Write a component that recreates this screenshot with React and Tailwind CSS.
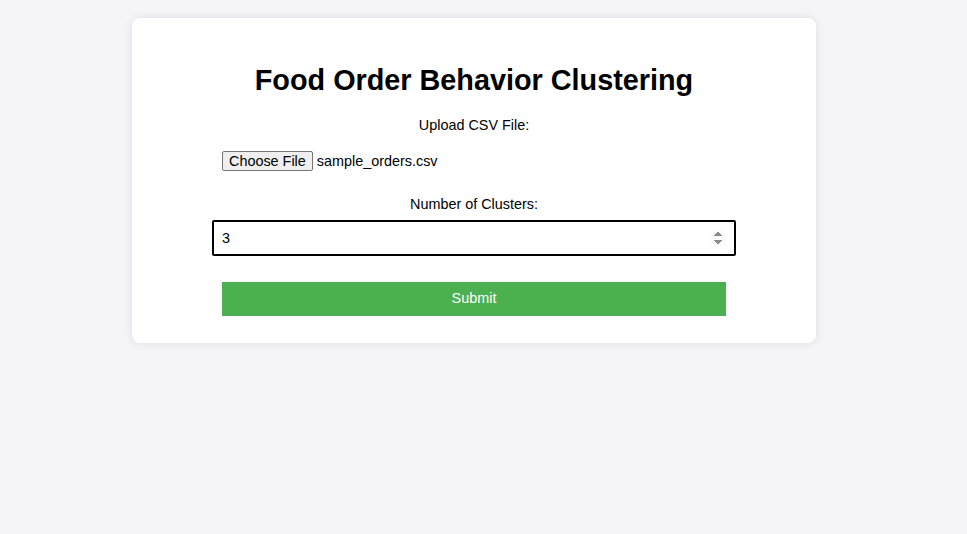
import React, { useState } from "react";

const App = () => {
  const [clusters, setClusters] = useState(3);

  return (
    <div
      className="min-h-screen bg-[#f4f4f9] pt-[18px]"
      style={{ fontFamily: '"Liberation Sans", Arial, sans-serif' }}
    >
      <div className="w-[948px]">
        <div className="mx-auto flex w-[684px] flex-col items-center rounded-lg bg-white px-[90px] pt-[46px] pb-[27px] shadow-[0_0_10px_rgba(0,0,0,0.1)]">
          {/* Title */}
          <h1 className="text-[28.8px] font-bold leading-[33px] text-black">
            Food Order Behavior Clustering
          </h1>

          {/* Upload */}
          <label className="mt-[20px] text-[14.4px] leading-4 text-black">
            Upload CSV File:
          </label>
          <div className="mt-[18px] flex w-full items-center gap-1 text-[14.4px] text-black">
            <span className="flex h-5 items-center rounded-[2px] border border-[#767676] bg-[#efefef] px-[6px] leading-4">
              Choose File
            </span>
            <span className="leading-4">sample_orders.csv</span>
          </div>

          {/* Clusters */}
          <label className="mt-[25px] text-[14.4px] leading-4 text-black">
            Number of Clusters:
          </label>
          <input
            type="number"
            autoFocus
            value={clusters}
            onChange={(e) => setClusters(e.target.value)}
            className="mt-[8px] h-9 w-[524px] rounded-[2px] border-2 border-black px-2 text-[14.4px] text-black outline-none"
          />

          {/* Submit */}
          <button className="mt-[26px] h-[34px] w-full bg-[#4caf50] text-[14.4px] text-white">
            Submit
          </button>
        </div>
      </div>
    </div>
  );
};

export default App;
